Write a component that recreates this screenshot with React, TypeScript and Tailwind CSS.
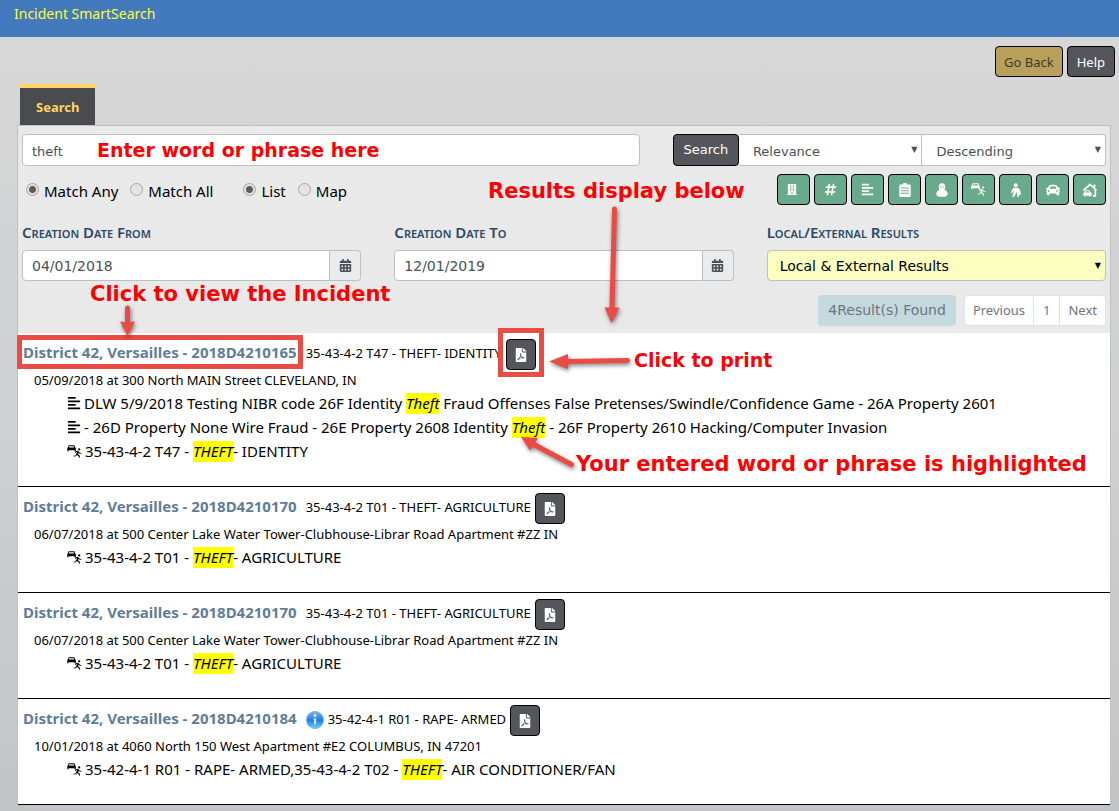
import type { ReactNode } from "react";
import { FaAlignLeft, FaBuilding, FaCalendarAlt, FaCar, FaFilePdf, FaHashtag } from "react-icons/fa";

type Detail = { kind: "narrative" | "offense"; before: string; hit: string; after: string };

type Incident = {
    id: string;
    title: string;
    info?: boolean;
    offense: string;
    address: string;
    details: Detail[];
};

const incidents: Incident[] = [
    {
        id: "a",
        title: "District 42, Versailles - 2018D4210165",
        offense: "35-43-4-2 T47 - THEFT- IDENTITY",
        address: "05/09/2018 at 300 North MAIN Street CLEVELAND, IN",
        details: [
            { kind: "narrative", before: "DLW 5/9/2018 Testing NIBR code 26F Identity ", hit: "Theft", after: " Fraud Offenses False Pretenses/Swindle/Confidence Game - 26A Property 2601" },
            { kind: "narrative", before: "- 26D Property None Wire Fraud - 26E Property 2608 Identity ", hit: "Theft", after: " - 26F Property 2610 Hacking/Computer Invasion" },
            { kind: "offense", before: "35-43-4-2 T47 - ", hit: "THEFT", after: "- IDENTITY" },
        ],
    },
    {
        id: "b",
        title: "District 42, Versailles - 2018D4210170",
        offense: "35-43-4-2 T01 - THEFT- AGRICULTURE",
        address: "06/07/2018 at 500 Center Lake Water Tower-Clubhouse-Librar Road Apartment #ZZ IN",
        details: [{ kind: "offense", before: "35-43-4-2 T01 - ", hit: "THEFT", after: "- AGRICULTURE" }],
    },
    {
        id: "c",
        title: "District 42, Versailles - 2018D4210170",
        offense: "35-43-4-2 T01 - THEFT- AGRICULTURE",
        address: "06/07/2018 at 500 Center Lake Water Tower-Clubhouse-Librar Road Apartment #ZZ IN",
        details: [{ kind: "offense", before: "35-43-4-2 T01 - ", hit: "THEFT", after: "- AGRICULTURE" }],
    },
    {
        id: "d",
        title: "District 42, Versailles - 2018D4210184",
        info: true,
        offense: "35-42-4-1 R01 - RAPE- ARMED",
        address: "10/01/2018 at 4060 North 150 West Apartment #E2 COLUMBUS, IN 47201",
        details: [{ kind: "offense", before: "35-42-4-1 R01 - RAPE- ARMED,35-43-4-2 T02 - ", hit: "THEFT", after: "- AIR CONDITIONER/FAN" }],
    },
];

const ClipboardIcon = () => (
    <svg viewBox="0 0 12 14" className="h-3.5 w-3" fill="currentColor">
        <path fillRule="evenodd" d="M4 1.5a2 2 0 0 1 4 0h2.5A1.2 1.2 0 0 1 11.7 2.7v10A1.2 1.2 0 0 1 10.5 14h-9A1.2 1.2 0 0 1 .3 12.7V2.7A1.2 1.2 0 0 1 1.5 1.5zM2 4.6v1h8v-1zM2 7.2v1h8v-1zM2 9.8v1h8v-1z" />
    </svg>
);

const HoodIcon = () => (
    <svg viewBox="0 0 12 14" className="h-3.5 w-3" fill="currentColor">
        <path fillRule="evenodd" d="M6 .3c2.2 0 3.3 1.7 3.3 3.7 0 1.2-.3 2-.8 2.7 2 .7 3.2 2.3 3.2 4.2C11.7 13 9.5 13.7 6 13.7S.3 13 .3 10.9c0-1.9 1.2-3.5 3.2-4.2-.5-.7-.8-1.5-.8-2.7C2.7 2 3.8.3 6 .3zM4.2 3.5v1h1.300v-1zM6.500 3.500v1h1.300v-1z" />
    </svg>
);

const CarRunIcon = () => (
    <svg viewBox="0 0 15 13" className="h-[13px] w-[15px] shrink-0" fill="currentColor">
        <path fillRule="evenodd" d="M1.6.3h5.800l.7 2 .7.6v3.300H7.500v-1H1.500v1H.3V2.900l.6-.6zM2.200 1.200l-.4 1.200h5.300l-.4-1.200z" />
        <circle cx="12.200" cy="4.400" r="1.100" />
        <path d="M8.200 6.500l2.200-.8 1.500.8.8 1.300 1.800.3v.7l-2.300-.2-.6-.8-.6 1.500 1.500 1 .6 2.100-.9.3-.7-1.700-1.700-.9-.8 1.200-2.500.3v-.8l2-.4 1.700-3.600-.8.200-.7 1-.7-.4z" />
    </svg>
);

const PersonIcon = () => (
    <svg viewBox="0 0 12 14" className="h-3.5 w-3" fill="currentColor">
        <circle cx="5.800" cy="2.200" r="2" />
        <path d="M4.500 4.700h2.800c1.500 0 2.300 1 2.700 2.400l1 4.400-1.500.4-.4-1.700v3.500H7.400L6.600 8.500 4.300 13.700H2.200l1.500-4.500-.3-1.500-1.200 2.600-1.400-.6L2.500 6C3 5.200 3.500 4.700 4.500 4.700z" />
    </svg>
);

const HouseCarIcon = () => (
    <svg viewBox="0 0 16 14" className="h-3.5 w-4" fill="none" stroke="currentColor">
        <path strokeWidth="1.700" d="M1.300 7.500L8 1.500l6.500 6M12.500 5.500V1.500M13.300 7v5.800H11" />
        <path fill="currentColor" stroke="none" fillRule="evenodd" d="M3.500 7.300h4l1 2 1.200.7v2.700H8.300v.8H7v-.8H3.500v.8H2.200v-.8H1.300V9.900l1.200-.6zM4.200 8.200l-.5 1.200h3.600l-.5-1.200z" />
    </svg>
);

const InfoIcon = () => (
    <svg viewBox="0 0 18 18" className="mr-1 mt-1.5 h-[18px] w-[18px]">
        <defs>
            <linearGradient id="ball" x1="0" y1="0" x2="0" y2="1">
                <stop offset="0" stopColor="#7db4e8" />
                <stop offset="0.5" stopColor="#1b7fe8" />
                <stop offset="1" stopColor="#6fd0ff" />
            </linearGradient>
        </defs>
        <circle cx="9" cy="9" r="8.500" fill="url(#ball)" stroke="#6f9fd0" strokeWidth="0.800" />
        <circle cx="9" cy="4.600" r="1.500" fill="#cfe3f5" />
        <path d="M7.500 7.300h2.700v6H7.900V8.500h-.4z" fill="#cfe3f5" />
    </svg>
);

const filters: { label: string; icon: ReactNode }[] = [
    { label: "Agency", icon: <FaBuilding className="mr-1 h-[11px] w-[10px]" /> },
    { label: "Number", icon: <FaHashtag className="h-[13px] w-[13px]" /> },
    { label: "Narrative", icon: <FaAlignLeft className="h-[13px] w-[13px]" /> },
    { label: "Report", icon: <ClipboardIcon /> },
    { label: "Suspect", icon: <HoodIcon /> },
    { label: "Offense", icon: <CarRunIcon /> },
    { label: "Person", icon: <PersonIcon /> },
    { label: "Vehicle", icon: <FaCar className="h-[14px] w-[14px]" /> },
    { label: "Property", icon: <HouseCarIcon /> },
];

const Radio = ({ name, label, checked }: { name: string; label: string; checked?: boolean }) => (
    <label className="flex items-center gap-[5px]">
        <input
            type="radio"
            name={name}
            defaultChecked={checked}
            className="mb-1 h-[13px] w-[13px] appearance-none rounded-full border border-[#a6a6a6] bg-[#e4e4e4] checked:bg-[radial-gradient(circle,#5c5c5c_3px,#e0e0e0_4px)]"
        />
        {label}
    </label>
);

const Arrow = () => <span aria-hidden="true" className="pointer-events-none absolute right-[5px] top-[10px] text-[8px] leading-3">▼</span>;

// Small caps are set with two sizes, so every letter keeps the same weight
const CapsLabel = ({ htmlFor, children }: { htmlFor: string; children: string }) => (
    <label htmlFor={htmlFor} className="block text-[15px] font-semibold leading-6 text-[#2c4a66]">
        {children.split(/([a-z]+)/).map((part, i) => (
            <span key={i} className={/[a-z]/.test(part) ? "text-[11px] uppercase" : ""}>{part}</span>
        ))}
    </label>
);

const DateField = ({ id, label, value }: { id: string; label: string; value: string }) => (
    <div>
        <CapsLabel htmlFor={id}>{label}</CapsLabel>
        <div className="mt-1 flex h-[31px] font-['DejaVu_Sans',sans-serif] text-[14px] text-[#495057]">
            <input id={id} type="text" defaultValue={value} className="min-w-0 flex-1 rounded-l border border-[#bfbfbf] bg-white px-[9px] pt-0.5" />
            <button type="button" aria-label={`Pick ${label}`} className="flex w-[31px] items-center justify-center rounded-r border border-l-0 border-[#bfbfbf] bg-[#e9ecef]">
                <FaCalendarAlt className="h-[13px] w-[13px]" />
            </button>
        </div>
    </div>
);

const IncidentRow = ({ incident }: { incident: Incident }) => (
    <li className="border-b border-black pb-[23px] pt-[6px]">
        <div className="flex h-[31px] items-start pl-[5px]">
            <a href="#incident" className="mr-[9px] text-[15px] font-bold leading-[26px] text-[#5f7d98]">{incident.title}</a>
            {incident.info && <InfoIcon />}
            <span className="mr-1 text-[13px] leading-7">{incident.offense}</span>
            <button type="button" aria-label="Print" className="flex h-[31px] w-[30px] items-center justify-center rounded border border-black bg-[#54565b] text-white">
                <FaFilePdf className="h-[14px] w-[12px]" />
            </button>
        </div>
        <p className="pl-4 text-[13px] leading-[21px]">{incident.address}</p>
        {incident.details.map((d) => (
            <p key={d.before} className="flex h-6 items-center gap-[3px] whitespace-pre pl-[49px] text-[15px] leading-[21px]">
                {d.kind === "narrative" ? <FaAlignLeft className="h-[14px] w-[14px] shrink-0" /> : <CarRunIcon />}
                <span>{d.before}<mark className="inline-block bg-[#ffff00] italic">{d.hit}</mark>{d.after}</span>
            </p>
        ))}
    </li>
);

const Note = ({ className, children }: { className: string; children: ReactNode }) => (
    <p className={`absolute whitespace-nowrap font-['DejaVu_Sans',sans-serif] font-bold leading-6 text-[#ff0000] ${className}`}>{children}</p>
);

// Help callouts drawn over the page
const Callouts = () => (
    <div className="pointer-events-none absolute inset-0 overflow-hidden">
        <Note className="left-[97px] top-[138px] text-[19px]">Enter word or phrase here</Note>
        <Note className="left-[488px] top-[179px] text-[21px]">Results display below</Note>
        <Note className="left-[90px] top-[282px] text-[21px]">Click to view the Incident</Note>
        <Note className="left-[634px] top-[348px] text-[19px]">Click to print</Note>
        <Note className="left-[576px] top-[452px] text-[21px]">Your entered word or phrase is highlighted</Note>
        <div className="absolute left-[17px] top-[335px] h-[34px] w-[286px] border-[5px] border-[#ea4b45]" />
        <div className="absolute left-[498px] top-[328px] h-[49px] w-[46px] border-[5px] border-[#ea4b45]" />
        <svg width="1119" height="811" className="absolute left-0 top-0 drop-shadow-[1px_2px_2px_rgba(0,0,0,0.5)]" fill="#ea4b45" stroke="#ea4b45" strokeLinecap="round" strokeWidth="5">
            <path d="M127.500 308v14" />
            <path stroke="none" d="M120 321.500l7.500 1 7.500-1-7.500 14.500z" />
            <path d="M614.500 209L612 308" />
            <path stroke="none" d="M604.500 307.500l15 .3-8 15.200z" />
            <path d="M627.500 360.500L567 361.500" />
            <path stroke="none" d="M549 361.500l19-7.500v15z" />
            <path d="M571.500 464.500L534 444.500" />
            <path stroke="none" d="M521 437l17 1-8 12.500z" />
        </svg>
    </div>
);

export default function App() {
    return (
        <div className="relative min-h-screen bg-linear-to-b from-[#d8d8d8] via-[#cfd0d2] to-[#c2c4c6] font-['Noto_Sans',sans-serif] text-[14px] text-black">
            <header className="h-[37px] bg-[#4379bd] px-[14px] pt-[3px]">
                <h1 className="text-[14px] leading-[22px] text-[#ffff33]">Incident SmartSearch</h1>
            </header>

            <div className="flex justify-end gap-1 pr-1 pt-[9px]">
                <button type="button" className="h-[31px] rounded border border-black bg-[#b9a05a] px-2 pt-0.5 text-[13px] text-[#3a3a30]">Go Back</button>
                <button type="button" className="h-[31px] rounded border border-black bg-[#54565b] px-[9px] pt-0.5 text-[13px] text-white">Help</button>
            </div>

            <main className="ml-[17px] mr-2 pt-[7px]">
                <nav className="flex pl-[3px]">
                    <a href="#search" className="flex h-[41px] items-center border-t-4 border-[#fcd65f] bg-[#4a4b4f] px-4 pt-0.5 text-[13px] font-bold text-[#fcd65f]">Search</a>
                </nav>
                <section className="border border-b-0 border-[#c0c0c0]">
                    <form className="h-[207px] bg-[#e9e9e9] px-1 pt-2" onSubmit={(e) => e.preventDefault()}>
                        <div className="flex h-8 font-['DejaVu_Sans',sans-serif] text-[13px] text-[#495057]">
                            <input aria-label="Search text" type="text" defaultValue="theft" className="mr-[33px] w-[57%] rounded border border-[#bfbfbf] bg-white px-[9px] pt-1" />
                            <button type="submit" className="w-[66px] rounded border border-black bg-[#54565b] text-white">Search</button>
                            <div className="relative flex-1">
                                <select aria-label="Sort by" className="h-full w-full appearance-none border border-l-0 border-[#bfbfbf] bg-white pl-[14px] pt-1">
                                    <option>Relevance</option>
                                </select>
                                <Arrow />
                            </div>
                            <div className="relative flex-1">
                                <select aria-label="Sort order" className="h-full w-full appearance-none rounded-r border border-l-0 border-[#bfbfbf] bg-white pl-[14px] pt-1">
                                    <option>Descending</option>
                                </select>
                                <Arrow />
                            </div>
                        </div>

                        <div className="mt-2 flex justify-between">
                            <div className="flex items-center pl-1 pt-1 text-[15px]">
                                <Radio name="match" label="Match Any" checked />
                                <span className="w-3" />
                                <Radio name="match" label="Match All" />
                                <span className="w-[30px]" />
                                <Radio name="view" label="List" checked />
                                <span className="w-3" />
                                <Radio name="view" label="Map" />
                            </div>
                            <div className="flex gap-1">
                                {filters.map((f) => (
                                    <button key={f.label} type="button" aria-label={f.label} className="flex h-[31px] w-[33px] items-center justify-center rounded border border-black bg-[#69aa8c] text-white">
                                        {f.icon}
                                    </button>
                                ))}
                            </div>
                        </div>

                        <div className="mt-[15px] grid grid-cols-3 gap-[33px]">
                            <DateField id="from" label="Creation Date From" value="04/01/2018" />
                            <DateField id="to" label="Creation Date To" value="12/01/2019" />
                            <div>
                                <CapsLabel htmlFor="scope">Local/External Results</CapsLabel>
                                <div className="relative mt-1 h-[31px] font-['DejaVu_Sans',sans-serif]">
                                    <select id="scope" className="h-full w-full appearance-none rounded border border-[#bfbfbf] bg-[#fbffbf] pl-3 pt-0.5 text-[14px]">
                                        <option>Local &amp; External Results</option>
                                    </select>
                                    <Arrow />
                                </div>
                            </div>
                        </div>

                        <div className="mt-[14px] flex justify-end gap-2 text-[13px] text-[#6c757d]">
                            <span className="flex h-[31px] items-center rounded bg-[#c4dadf] px-[10px] font-['DejaVu_Sans',sans-serif] text-[14px]">4Result(s) Found</span>
                            <div className="flex h-[31px] rounded border border-[#dee2e6] bg-white">
                                <button type="button" className="border-r border-[#dee2e6] px-2">Previous</button>
                                <button type="button" className="border-r border-[#dee2e6] px-[9px] text-[#5f7d98]">1</button>
                                <button type="button" className="px-2">Next</button>
                            </div>
                        </div>
                    </form>

                    <ul className="bg-white">
                        {incidents.map((incident) => (
                            <IncidentRow key={incident.id} incident={incident} />
                        ))}
                    </ul>
                </section>
            </main>

            <Callouts />
        </div>
    );
}
